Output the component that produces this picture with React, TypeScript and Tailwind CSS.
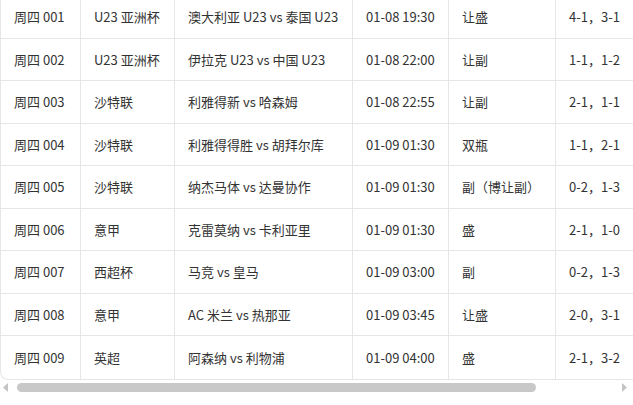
import React from "react";

const rows = [
  ["周四 001", "U23 亚洲杯", "澳大利亚 U23 vs 泰国 U23", "01-08 19:30", "让盛", "4-1，3-1"],
  ["周四 002", "U23 亚洲杯", "伊拉克 U23 vs 中国 U23", "01-08 22:00", "让副", "1-1，1-2"],
  ["周四 003", "沙特联", "利雅得新 vs 哈森姆", "01-08 22:55", "让副", "2-1，1-1"],
  ["周四 004", "沙特联", "利雅得得胜 vs 胡拜尔库", "01-09 01:30", "双瓶", "1-1，2-1"],
  ["周四 005", "沙特联", "纳杰马体 vs 达曼协作", "01-09 01:30", "副（博让副）", "0-2，1-3"],
  ["周四 006", "意甲", "克雷莫纳 vs 卡利亚里", "01-09 01:30", "盛", "2-1，1-0"],
  ["周四 007", "西超杯", "马竞 vs 皇马", "01-09 03:00", "副", "0-2，1-3"],
  ["周四 008", "意甲", "AC 米兰 vs 热那亚", "01-09 03:45", "让盛", "2-0，3-1"],
  ["周四 009", "英超", "阿森纳 vs 利物浦", "01-09 04:00", "盛", "2-1，3-2"],
];

const widths = ["w-[80px]", "w-[94px]", "w-[178px]", "w-[96px]", "w-[107px]", "w-[120px]"];

export default function App() {
  return (
    <div
      className="w-[633px] h-[405px] overflow-hidden bg-white text-[13px] text-[#333]"
      style={{ fontFamily: '"Noto Sans CJK SC", "Noto Sans", sans-serif' }}
    >
      <div className="overflow-hidden border-l border-b border-[#e6e6e6] rounded-bl-[8px] -mt-[4px]">
        {rows.map((r, i) => (
          <div
            key={i}
            className={`flex h-[42.5px] w-[700px] ${i < rows.length - 1 ? "border-b border-[#e6e6e6]" : ""}`}
          >
            {r.map((c, j) => (
              <div
                key={j}
                className={`${widths[j]} shrink-0 flex items-center pl-[13px] border-r border-[#e6e6e6] whitespace-nowrap overflow-hidden`}
              >
                {c}
              </div>
            ))}
          </div>
        ))}
      </div>
      <div className="relative flex items-center h-[16px] mt-[0px]">
        <svg width="5" height="9" viewBox="0 0 5 9" className="ml-[3px] shrink-0">
          <polygon points="5,0 0,4.5 5,9" fill="#c4c4c4" />
        </svg>
        <div className="ml-[9px] w-[519px] h-[9px] rounded-full bg-[#c8c8c8]" />
        <div className="flex-1" />
        <svg width="5" height="9" viewBox="0 0 5 9" className="mr-[6px] shrink-0">
          <polygon points="0,0 5,4.5 0,9" fill="#c4c4c4" />
        </svg>
      </div>
    </div>
  );
}
